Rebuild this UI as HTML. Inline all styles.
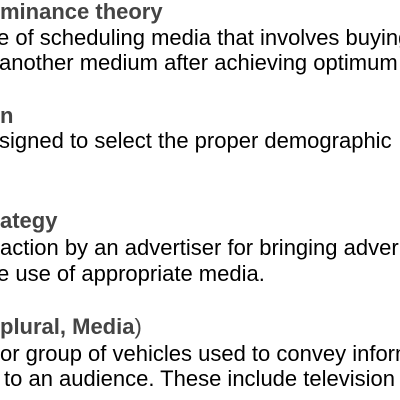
<!DOCTYPE html>
<html><head><style>
body{margin:0;width:400px;height:400px;overflow:hidden;background:#fff;position:relative;font-family:"Liberation Sans",Helvetica,Arial,sans-serif;}
div{position:absolute;white-space:nowrap;font-size:22px;line-height:25px;color:#000;}
.h{font-weight:bold;color:#444;}
</style></head><body>
<div class="h" style="top:-1px;left:0">minance theory</div>
<div style="top:25px;left:-3px">e of scheduling media that involves buying</div>
<div style="top:50px;left:-1px">another medium after achieving optimum</div>
<div class="h" style="top:103px;left:0">n</div>
<div style="top:128px;left:-1px">signed to select the proper demographic</div>
<div class="h" style="top:208px;left:0">ategy</div>
<div style="top:235px;left:0">action by an advertiser for bringing adver</div>
<div style="top:261px;left:-3px">e use of appropriate media.</div>
<div class="h" style="top:314px;left:0">plural, Media<span style="font-weight:normal">)</span></div>
<div style="top:341px;left:0">or group of vehicles used to convey inform</div>
<div style="top:366px;left:4px">to an audience. These include television</div>
</body></html>
